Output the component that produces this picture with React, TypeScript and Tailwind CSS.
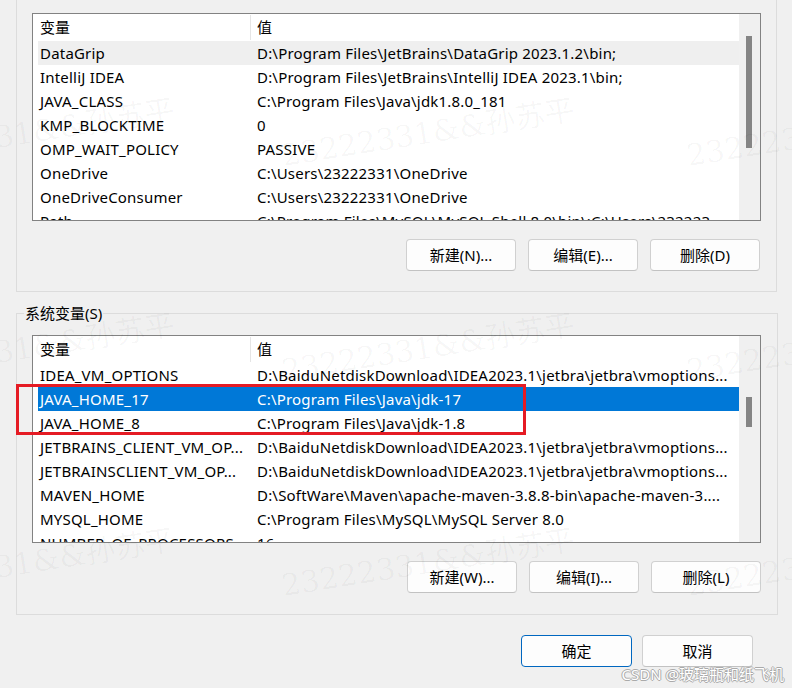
import React from "react";

const FONT = { fontFamily: '"Noto Sans", "Noto Sans CJK SC", sans-serif' };

type Row = { name: string; value: string; hover?: boolean; selected?: boolean };

const userVars: Row[] = [
  { name: "DataGrip", value: "D:\\Program Files\\JetBrains\\DataGrip 2023.1.2\\bin;", hover: true },
  { name: "IntelliJ IDEA", value: "D:\\Program Files\\JetBrains\\IntelliJ IDEA 2023.1\\bin;" },
  { name: "JAVA_CLASS", value: "C:\\Program Files\\Java\\jdk1.8.0_181" },
  { name: "KMP_BLOCKTIME", value: "0" },
  { name: "OMP_WAIT_POLICY", value: "PASSIVE" },
  { name: "OneDrive", value: "C:\\Users\\23222331\\OneDrive" },
  { name: "OneDriveConsumer", value: "C:\\Users\\23222331\\OneDrive" },
  { name: "Path", value: "C:\\Program Files\\MySQL\\MySQL Shell 8.0\\bin\\;C:\\Users\\232223..." },
];

const sysVars: Row[] = [
  { name: "IDEA_VM_OPTIONS", value: "D:\\BaiduNetdiskDownload\\IDEA2023.1\\jetbra\\jetbra\\vmoptions..." },
  { name: "JAVA_HOME_17", value: "C:\\Program Files\\Java\\jdk-17", selected: true },
  { name: "JAVA_HOME_8", value: "C:\\Program Files\\Java\\jdk-1.8" },
  { name: "JETBRAINS_CLIENT_VM_OP...", value: "D:\\BaiduNetdiskDownload\\IDEA2023.1\\jetbra\\jetbra\\vmoptions..." },
  { name: "JETBRAINSCLIENT_VM_OP...", value: "D:\\BaiduNetdiskDownload\\IDEA2023.1\\jetbra\\jetbra\\vmoptions..." },
  { name: "MAVEN_HOME", value: "D:\\SoftWare\\Maven\\apache-maven-3.8.8-bin\\apache-maven-3...." },
  { name: "MYSQL_HOME", value: "C:\\Program Files\\MySQL\\MySQL Server 8.0" },
  { name: "NUMBER_OF_PROCESSORS", value: "16" },
];

function VarList({ rows, thumbTop, thumbHeight }: { rows: Row[]; thumbTop: string; thumbHeight: string }) {
  return (
    <div className="flex w-[729px] h-[208px] border border-[#828282] bg-white overflow-hidden">
      <div className="flex-1 flex flex-col overflow-hidden">
        <div className="flex h-[27px] shrink-0 ml-[5px] items-center text-[15px] text-black">
          <div className="w-[212px] pl-[2px]">变量</div>
          <div className="h-[25px] border-l border-[#e5e5e5]" />
          <div className="pl-[6px]">值</div>
        </div>
        {rows.map((r) => (
          <div
            key={r.name}
            className={
              "flex h-[24px] shrink-0 ml-[5px] items-center text-[15px] tracking-[0.2px] whitespace-nowrap " +
              (r.selected ? "bg-[#0078d7] text-white" : r.hover ? "bg-[#efefef] text-black" : "text-black")
            }
          >
            <div className="w-[212px] shrink-0 pl-[2px] overflow-hidden">{r.name}</div>
            <div className="pl-[7px] overflow-hidden">{r.value}</div>
          </div>
        ))}
      </div>
      <div className={"w-[21px] shrink-0 bg-[#f0f0f0] pl-[7px] " + thumbTop}>
        <div className={"w-[6px] bg-[#858585] " + thumbHeight} />
      </div>
    </div>
  );
}

function Btn({ label, primary }: { label: string; primary?: boolean }) {
  return (
    <button
      className={
        "h-[32px] w-[110px] rounded-[4px] bg-[#fdfdfd] text-[15px] text-black border " +
        (primary ? "border-[#0067c0]" : "border-[#d0d0d0] border-b-[#c2c2c2]")
      }
    >
      {label}
    </button>
  );
}

function Watermark({ x, y }: { x: number; y: number }) {
  return (
    <span
      className="absolute whitespace-nowrap text-[30px] text-black/[0.035] -rotate-[9deg] pointer-events-none select-none"
      style={{ left: x, top: y, fontFamily: '"DejaVu Serif", "Noto Sans CJK SC", serif' }}
    >
      23222331&amp;&amp;孙苏平
    </span>
  );
}

export default function App() {
  const marks: [number, number][] = [];
  [110, 325, 540].forEach((y) => [-120, 280, 685].forEach((x) => marks.push([x, y])));

  return (
    <div className="relative w-[792px] h-[688px] bg-[#f0f0f0] pl-[16px] overflow-hidden" style={FONT}>
      {/* 用户变量 */}
      <div className="w-[761px] h-[292px] border-x border-b border-[#dcdcdc] pt-[13px] pl-[15px] pr-[16px]">
        <VarList rows={userVars} thumbTop="pt-[22px]" thumbHeight="h-[112px]" />
        <div className="flex justify-end gap-[12px] mt-[18px]">
          <Btn label="新建(N)..." />
          <Btn label="编辑(E)..." />
          <Btn label="删除(D)" />
        </div>
      </div>

      {/* 系统变量 */}
      <fieldset className="mt-[11px] w-[761px] border border-[#dcdcdc] pl-[15px] pr-[16px] pt-[12px] pb-[21px]">
        <legend className="-ml-[8px] px-[1px] text-[15px] leading-[20px] text-black">系统变量(S)</legend>
        <VarList rows={sysVars} thumbTop="pt-[61px]" thumbHeight="h-[30px]" />
        <div className="flex justify-end gap-[12px] mt-[18px]">
          <Btn label="新建(W)..." />
          <Btn label="编辑(I)..." />
          <Btn label="删除(L)" />
        </div>
      </fieldset>

      <div className="flex justify-end gap-[10px] mt-[20px] pr-[39px]">
        <button className="h-[32px] w-[111px] rounded-[4px] bg-[#fdfdfd] text-[15px] text-black border border-[#0067c0]">
          确定
        </button>
        <button className="h-[32px] w-[111px] rounded-[4px] bg-[#fdfdfd] text-[15px] text-black border border-[#d0d0d0] border-b-[#c2c2c2]">
          取消
        </button>
      </div>

      {/* 高亮框 */}
      <div className="absolute left-[16px] top-[384px] w-[510px] h-[51px] border-[3px] border-[#e51b24] pointer-events-none" />

      {marks.map(([x, y]) => (
        <Watermark key={`${x}-${y}`} x={x} y={y} />
      ))}

      <span className="absolute right-[8px] bottom-[3px] text-[15px] text-white [text-shadow:1px_0_0_#aaa,-1px_0_0_#aaa,0_1px_0_#aaa,0_-1px_0_#aaa] pointer-events-none">
        CSDN @玻璃瓶和纸飞机
      </span>
    </div>
  );
}
